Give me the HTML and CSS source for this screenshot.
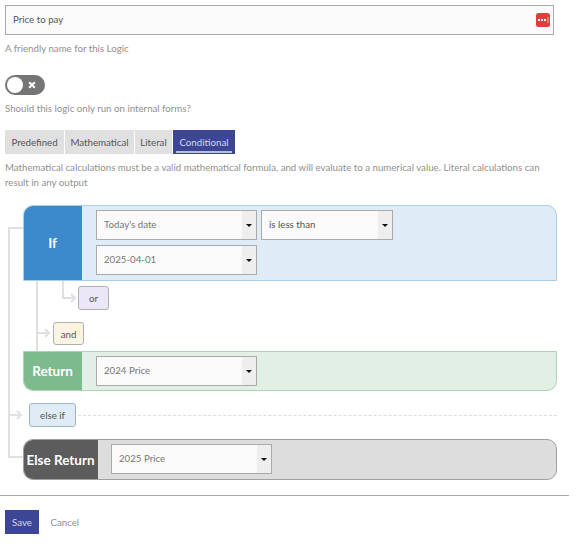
FILE: index.html
```html
<!DOCTYPE html>
<html lang="en">
<head>
    <meta charset="UTF-8" />
    <title>Logic</title>
    <link rel="stylesheet" href="styles.css">
</head>
<body>
    <main class="form">
        <div class="name-field">
            <span>Price to pay</span>
            <svg class="name-icon" width="14" height="14" viewBox="0 0 14 14">
                <rect width="14" height="14" rx="2.5" fill="#e03e3e"/>
                <rect x="2" y="6" width="2" height="2" fill="#fff"/>
                <rect x="5" y="6" width="2" height="2" fill="#fff"/>
                <rect x="8" y="6" width="2" height="2" fill="#fff"/>
                <rect x="11.5" y="4" width="1" height="6" fill="#f3b4b4"/>
            </svg>
        </div>
        <p class="hint hint-name">A friendly name for this Logic</p>

        <div class="toggle">
            <span class="toggle-knob"></span>
            <svg width="8" height="8" viewBox="0 0 8 8">
                <path d="M1.2 1.2 6.8 6.8M6.8 1.2 1.2 6.8" stroke="#fff" stroke-width="2"/>
            </svg>
        </div>
        <p class="hint hint-toggle">Should this logic only run on internal forms?</p>

        <div class="tabs">
            <button class="tab tab-predefined">Predefined</button>
            <button class="tab tab-mathematical">Mathematical</button>
            <button class="tab tab-literal">Literal</button>
            <button class="tab tab-conditional active"><span>Conditional</span></button>
        </div>
        <p class="hint hint-tabs">Mathematical calculations must be a valid mathematical formula, and will evaluate to a numerical value. Literal calculations can result in any output</p>

        <div class="logic">
            <svg class="connectors" width="80" height="260" viewBox="0 0 80 260">
                <g fill="none" stroke="#e0e0e0" stroke-width="2">
                    <path d="M23 23H9V252H23"/>
                    <path d="M37 76V146"/>
                    <path d="M38 128H48M45 124l4 4-4 4"/>
                    <path d="M63 76V93H74M71 89l4 4-4 4"/>
                    <path d="M10 210H20M17 206l4 4-4 4"/>
                </g>
            </svg>

            <div class="block block-if">
                <div class="block-label">If</div>
                <div class="block-body">
                    <div class="select select-wide"><span>Today's date</span><i></i></div>
                    <div class="select select-op"><span>is less than</span><i></i></div>
                    <div class="select select-wide"><span>2025-04-01</span><i></i></div>
                </div>
            </div>

            <div class="add-row add-or"><button class="add-btn btn-or">or</button></div>
            <div class="add-row add-and"><button class="add-btn btn-and">and</button></div>

            <div class="block block-return">
                <div class="block-label">Return</div>
                <div class="block-body">
                    <div class="select select-wide"><span>2024 Price</span><i></i></div>
                </div>
            </div>

            <div class="add-row add-else">
                <button class="add-btn btn-else">else if</button>
                <span class="dashes"></span>
            </div>

            <div class="block block-else">
                <div class="block-label">Else Return</div>
                <div class="block-body">
                    <div class="select select-wide"><span>2025 Price</span><i></i></div>
                </div>
            </div>
        </div>

        <footer class="actions">
            <button class="save">Save</button>
            <button class="cancel">Cancel</button>
        </footer>
    </main>
</body>
</html>
```

FILE: styles.css
```css
* {
    box-sizing: border-box;
}

body {
    font-family: Lato, "Open Sans", sans-serif;
    font-size: 9.7px;
    margin: 0;
    background-color: #ffffff;
    color: #555555;
}

button {
    font: inherit;
    border: none;
    padding: 0;
}

.form {
    width: 569px;
    padding-top: 5px;
}

.name-field {
    display: flex;
    align-items: center;
    justify-content: space-between;
    width: 549px;
    height: 30px;
    margin-left: 5px;
    padding: 0 3px 0 7px;
    background-color: #fafafa;
    border: 1px solid #aaaaaa;
    color: #555555;
}

.name-field span {
    padding-bottom: 2px;
}

.hint {
    margin: 0 0 0 5px;
    color: #8f8f8f;
    line-height: 15px;
}

.hint-name {
    margin-top: 6px;
}

.toggle {
    display: flex;
    align-items: center;
    justify-content: space-between;
    width: 40px;
    height: 20px;
    margin: 19px 0 0 5px;
    padding: 0 9px 0 2px;
    border-radius: 10px;
    background-color: #757575;
}

.toggle-knob {
    width: 16px;
    height: 16px;
    border-radius: 50%;
    background-color: #ffffff;
}

.hint-toggle {
    margin-top: 6px;
}

.tabs {
    display: flex;
    gap: 1px;
    margin: 14px 0 0 5px;
}

.tab {
    height: 24px;
    background-color: #e0e0e0;
    color: #555555;
}

.tab-predefined {
    width: 59px;
}

.tab-mathematical {
    width: 69px;
}

.tab-literal {
    width: 37px;
}

.tab-conditional {
    width: 62px;
}

.tab.active {
    padding: 0 3px;
    background-color: #3c4695;
    color: #d5d8ee;
}

.tab.active span {
    display: block;
    height: 19px;
    margin-top: 3px;
    line-height: 16px;
    border-bottom: 2px solid #b9bde0;
}

.hint-tabs {
    width: 550px;
    margin-top: 6px;
}

.logic {
    position: relative;
    width: 557px;
    margin-top: 15px;
    padding-left: 23px;
}

.connectors {
    position: absolute;
    left: 0;
    top: 0;
}

.block {
    position: relative;
    display: flex;
    border-radius: 10px;
    overflow: hidden;
    border: 1px solid;
}

.block-label {
    display: flex;
    flex: none;
    align-items: center;
    justify-content: center;
    width: 59px;
    margin: -1px 0 -1px -1px;
    color: #ffffff;
    font-size: 13.5px;
    font-weight: 700;
}

.block-body {
    display: flex;
    flex: 1;
    flex-wrap: wrap;
    align-content: flex-start;
    gap: 5px 4px;
    padding: 4px 14px;
}

.block-if {
    height: 76px;
    border-radius: 10px 10px 0 0;
    border-color: #a9cdec;
    background-color: #dfebf5;
}

.block-if .block-label {
    background-color: #3c89cb;
}

.block-return {
    height: 40px;
    border-radius: 0 0 10px 10px;
    border-color: #a9d5b3;
    background-color: #e2efe5;
}

.block-return .block-label {
    background-color: #7dbb8d;
}

.block-else {
    height: 41px;
    border-color: #a0a0a0;
    background-color: #dddddd;
}

.block-else .block-label {
    width: 75px;
    background-color: #5c5c5c;
}

.block-else .block-body {
    padding-left: 13px;
}

.select {
    display: flex;
    align-items: center;
    justify-content: space-between;
    height: 30px;
    padding-left: 7px;
    background-color: #fafafa;
    border: 1px solid #aaaaaa;
    color: #777777;
}

.select span {
    padding-bottom: 2px;
}

.select-wide {
    width: 161px;
}

.select-op {
    width: 132px;
    color: #555555;
}

.select i {
    display: flex;
    align-items: center;
    justify-content: center;
    width: 14px;
    height: 100%;
    background-color: #eeeeee;
}

.select i::after {
    content: "";
    border-style: solid;
    border-color: #111111 transparent transparent;
    border-width: 3px 3.5px 0;
}

.add-row {
    display: flex;
    align-items: center;
}

.add-btn {
    height: 24px;
    border-radius: 3px;
    border: 1px solid #b0b0b0;
    color: #555555;
}

.add-or {
    margin: 5px 0 0 55px;
}

.btn-or {
    width: 31px;
    background-color: #ebe7f7;
}

.add-and {
    margin: 12px 0 6px 30px;
}

.btn-and {
    width: 31px;
    height: 23px;
    background-color: #fbf3e3;
}

.add-else {
    height: 24px;
    margin: 12px 0 12px 6px;
}

.btn-else {
    width: 47px;
    background-color: #dfebf5;
    border-color: #9fb4c4;
}

.dashes {
    flex: 1;
    margin-left: 2px;
    border-top: 1px dashed #dddddd;
}

.actions {
    margin-top: 15px;
    padding: 14px 5px;
    border-top: 1px solid #aaaaaa;
}

.save {
    width: 34px;
    height: 24px;
    background-color: #3c4695;
    color: #d5d8ee;
}

.cancel {
    margin-left: 9px;
    background: none;
    color: #8f8f8f;
}
```
